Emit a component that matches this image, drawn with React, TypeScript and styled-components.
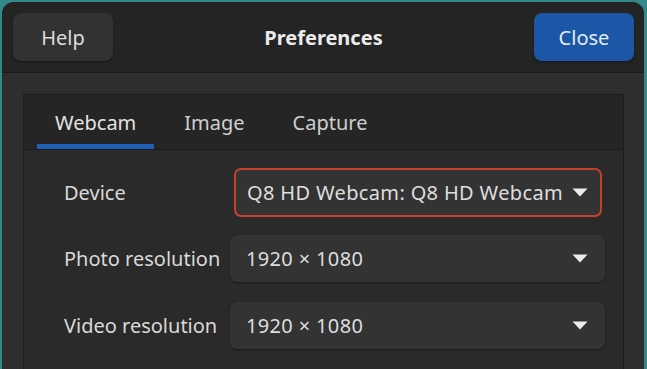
import React from 'react';
import styled, { createGlobalStyle } from 'styled-components';

const GlobalStyle = createGlobalStyle`
  html, body {
    margin: 0;
    padding: 0;
    background: #33898a;
    overflow: hidden;
  }
  body {
    font-family: "Noto Sans", "Open Sans", sans-serif;
    -webkit-font-smoothing: antialiased;
  }
`;

const Window = styled.div`
  margin: 2px 3px 0 2px;
  height: 367px;
  border-radius: 12px 12px 0 0;
  background: #2e2e2e;
  overflow: hidden;
  display: flex;
  flex-direction: column;
`;

const HeaderBar = styled.header`
  height: 70px;
  flex-shrink: 0;
  display: flex;
  align-items: center;
  justify-content: space-between;
  padding: 0 10px 0 11px;
  background: #242424;
  border-bottom: 1px solid #1a1a1a;
`;

const HeaderButton = styled.button<{ $suggested?: boolean }>`
  width: 100px;
  height: 48px;
  border: none;
  border-radius: 8px;
  font-family: inherit;
  font-size: 20px;
  color: ${({ $suggested }) => ($suggested ? '#e4ebf5' : '#dcdcdc')};
  background: ${({ $suggested }) => ($suggested ? '#1b57a6' : '#323232')};
  box-shadow: 0 1px 2px rgba(0, 0, 0, 0.35);
`;

const Title = styled.h1`
  margin: 0;
  font-size: 20px;
  font-weight: 700;
  color: #ececec;
`;

const Content = styled.div`
  flex: 1;
  padding: 21px 20px 0 21px;
`;

const Notebook = styled.div`
  height: 100%;
  border: 1px solid #1e1e1e;
  border-bottom: none;
  background: #2a2a2a;
  display: flex;
  flex-direction: column;
`;

const TabBar = styled.div`
  height: 54px;
  display: flex;
  gap: 12px;
  padding: 0 13px;
  background: #252525;
  border-bottom: 1px solid #1c1c1c;
`;

const Tab = styled.div<{ $active?: boolean }>`
  display: flex;
  align-items: center;
  padding: 0 18px;
  font-size: 20px;
  color: ${({ $active }) => ($active ? '#e2e2e2' : '#cfcfcf')};
  border-bottom: 5px solid ${({ $active }) => ($active ? '#1e5fb5' : 'transparent')};
  padding-top: 5px;
`;

const Page = styled.div`
  display: flex;
  flex-direction: column;
  gap: 20px;
  padding: 18px 18px 0 40px;
`;

const Row = styled.div`
  display: grid;
  grid-template-columns: 166px 1fr;
  align-items: center;
  height: 47px;
`;

const Label = styled.span`
  font-size: 20px;
  color: #d9d9d9;
`;

const Combo = styled.div<{ $focused?: boolean }>`
  height: ${({ $focused }) => ($focused ? '49px' : '47px')};
  margin: ${({ $focused }) => ($focused ? '0 3px 0 4px' : '0')};
  box-sizing: border-box;
  display: flex;
  align-items: center;
  justify-content: space-between;
  padding: 0 ${({ $focused }) => ($focused ? '12px' : '17px')} 0 ${({ $focused }) => ($focused ? '11px' : '16px')};
  border-radius: 7px;
  background: #333333;
  border: ${({ $focused }) => ($focused ? '2px solid #c7402c' : 'none')};
  box-shadow: ${({ $focused }) => ($focused ? 'none' : '0 1px 2px rgba(0, 0, 0, 0.4)')};
  font-size: 20px;
  color: #dedede;
`;

const ComboText = styled.span`
  white-space: nowrap;
  letter-spacing: 0.35px;
`;

const Arrow = () => (
  <svg width="16" height="9" viewBox="0 0 16 9">
    <path d="M0.5 0.5 L15.5 0.5 L8 8.5 Z" fill="#ececec" />
  </svg>
);

const rows = [
  { label: 'Device', value: 'Q8 HD Webcam: Q8 HD Webcam', focused: true },
  { label: 'Photo resolution', value: '1920 × 1080' },
  { label: 'Video resolution', value: '1920 × 1080' },
];

export default function App() {
  return (
    <>
      <GlobalStyle />
      <Window>
        <HeaderBar>
          <HeaderButton>Help</HeaderButton>
          <Title>Preferences</Title>
          <HeaderButton $suggested>Close</HeaderButton>
        </HeaderBar>
        <Content>
          <Notebook>
            <TabBar>
              <Tab $active>Webcam</Tab>
              <Tab>Image</Tab>
              <Tab>Capture</Tab>
            </TabBar>
            <Page>
              {rows.map((row) => (
                <Row key={row.label}>
                  <Label>{row.label}</Label>
                  <Combo $focused={row.focused}>
                    <ComboText>{row.value}</ComboText>
                    <Arrow />
                  </Combo>
                </Row>
              ))}
            </Page>
          </Notebook>
        </Content>
      </Window>
    </>
  );
}
